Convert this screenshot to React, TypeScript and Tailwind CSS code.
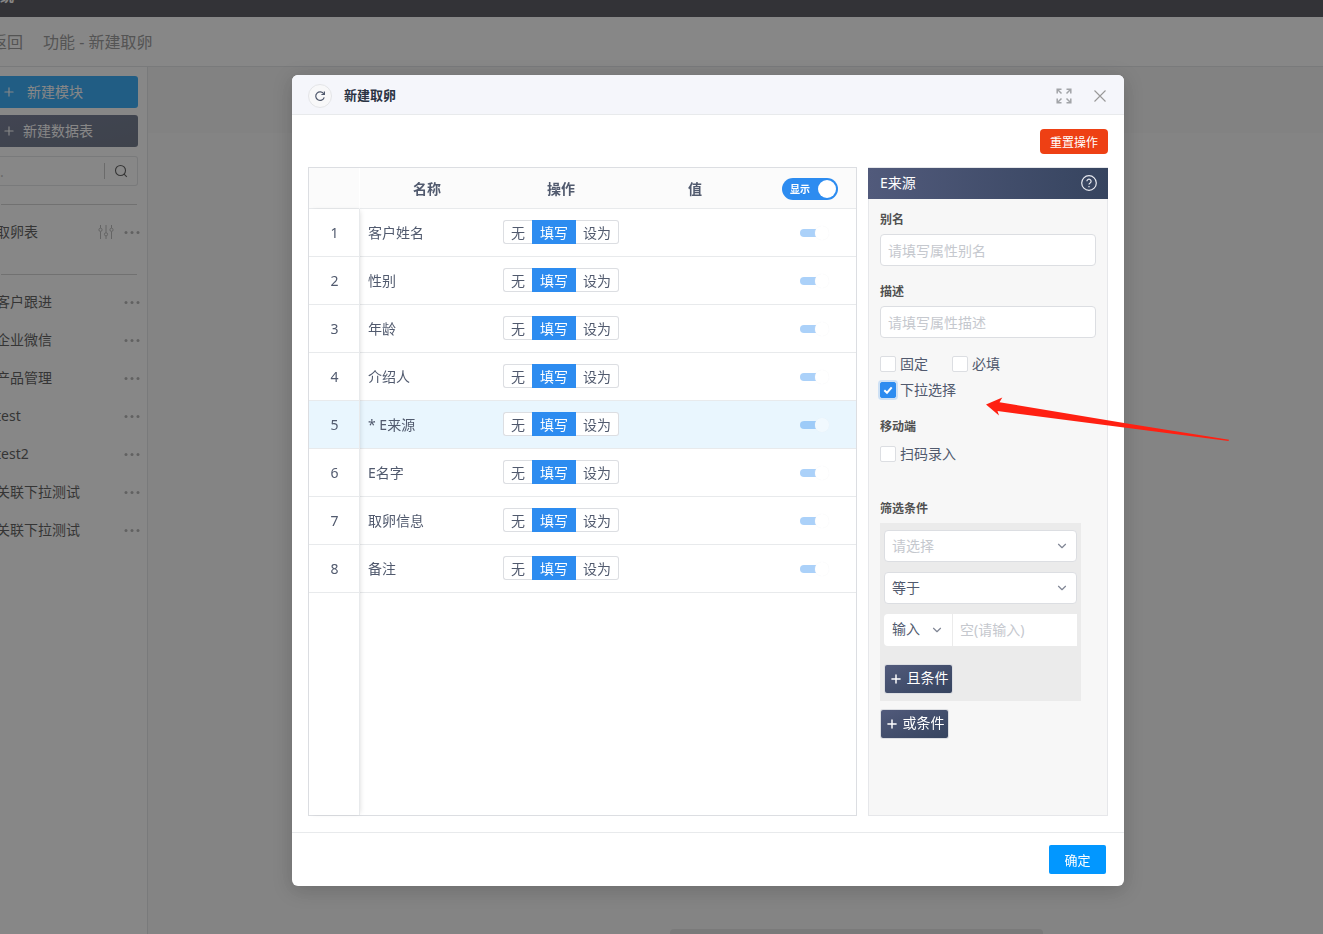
import React, { useState } from "react";
import { ChevronDown, Plus } from "lucide-react";

const fields = [
  "客户姓名",
  "性别",
  "年龄",
  "介绍人",
  "* E来源",
  "E名字",
  "取卵信息",
  "备注",
];

const tables = [
  "客户跟进",
  "企业微信",
  "产品管理",
  "test",
  "test2",
  "关联下拉测试",
  "关联下拉测试",
];

const Dots = () => (
  <svg width="16" height="4" viewBox="0 0 16 4" fill="#a0a0a0">
    <circle cx="2" cy="2.500" r="1.500" />
    <circle cx="8" cy="2.500" r="1.500" />
    <circle cx="14" cy="2.500" r="1.500" />
  </svg>
);

const Sidebar = () => (
  <aside className="w-[148px] shrink-0 border-r border-[#dcdee2] bg-white pt-[9px]">
    <div className="flex flex-col gap-[7px] pr-[9px]">
      <button className="flex h-8 items-center rounded-r-[3px] bg-[#0297f8] pl-[2px] text-sm text-white">
        <Plus size={14} strokeWidth={2} />
        <span className="ml-[11px]">新建模块</span>
      </button>
      <button className="flex h-8 items-center rounded-r-[3px] bg-gradient-to-br from-[#515a7b] to-[#4a556c] pl-[2px] text-sm text-white">
        <Plus size={14} strokeWidth={2} />
        <span className="ml-[7px]">新建数据表</span>
      </button>
    </div>
    <div className="mt-[9px] mr-[9px] flex h-[30px] items-center rounded-r-[3px] border border-l-0 border-[#dcdee2]">
      <input
        aria-label="搜索"
        placeholder="."
        className="h-full min-w-0 flex-1 bg-transparent text-sm outline-none placeholder:text-[#b5b5b5]"
      />
      <span className="h-4 w-px bg-[#b8b8b8]" />
      <button aria-label="搜索" className="flex w-8 justify-center">
        <svg width="14" height="14" viewBox="0 0 14 14" fill="none" stroke="#333" strokeWidth="1.1">
          <circle cx="6.5" cy="6.5" r="5" />
          <path d="M9.8 9.8 L12.8 12.8" />
        </svg>
      </button>
    </div>
    <hr className="mt-[18px] mr-[10px] ml-px border-[#c8c8c8]" />
    <div className="mt-2 -ml-1 flex h-[38px] items-center pr-[7px] text-sm text-[#333]">
      <span className="flex-1">取卵表</span>
      <svg width="16" height="16" viewBox="0 0 16 16" fill="none" stroke="#a8a8a8" strokeWidth="1">
        <path d="M2.5 1v3M2.5 7.500v7.500M8 1v7.500M8 12v3M13.500 1v3M13.500 7.500v7.500" />
        <circle cx="2.500" cy="5.800" r="1.600" />
        <circle cx="8" cy="10.300" r="1.600" />
        <circle cx="13.500" cy="5.800" r="1.600" />
      </svg>
      <span className="ml-[10px]">
        <Dots />
      </span>
    </div>
    <hr className="mt-[23px] mr-[10px] ml-px border-[#c8c8c8]" />
    <ul className="mt-2 -ml-1 text-sm text-[#333]">
      {tables.map((name, i) => (
        <li key={i} className="flex h-[38px] items-center justify-between pr-[7px]">
          <span>{name}</span>
          <Dots />
        </li>
      ))}
    </ul>
  </aside>
);

const Check = ({ label, defaultChecked = false }: { label: string; defaultChecked?: boolean }) => (
  <label className="flex h-[26px] items-center gap-1 text-sm text-[#515a6e]">
    <span className="relative flex">
      <input
        type="checkbox"
        defaultChecked={defaultChecked}
        className="peer h-4 w-4 appearance-none rounded-[2px] border border-[#dcdee2] bg-white checked:border-[#2d8cf0] checked:bg-[#2d8cf0] checked:ring-2 checked:ring-[#2d8cf0]/20"
      />
      <svg
        className="pointer-events-none absolute inset-0 hidden peer-checked:block"
        width="16"
        height="16"
        viewBox="0 0 16 16"
        fill="none"
        stroke="#fff"
        strokeWidth="2"
      >
        <path d="M4.300 8.200 L7 10.700 L11.700 5.300" />
      </svg>
    </span>
    {label}
  </label>
);

const Dropdown = ({
  label,
  options,
  className,
}: {
  label: string;
  options: string[];
  className: string;
}) => (
  <div className="relative">
    <select
      aria-label={label}
      className={`h-8 w-full appearance-none bg-white text-sm outline-none ${className}`}
    >
      {options.map((o) => (
        <option key={o}>{o}</option>
      ))}
    </select>
    <ChevronDown
      size={14}
      className="pointer-events-none absolute top-[9px] right-2 text-[#808695]"
    />
  </div>
);

const TextField = ({ id, label, placeholder }: { id: string; label: string; placeholder: string }) => (
  <div>
    <label htmlFor={id} className="block text-xs leading-5 font-bold text-[#515151]">
      {label}
    </label>
    <input
      id={id}
      placeholder={placeholder}
      className="mt-1 h-8 w-full rounded border border-[#dcdee2] bg-white px-[7px] text-sm outline-none placeholder:text-[#c5c8ce]"
    />
  </div>
);

const AddButton = ({ children }: { children: React.ReactNode }) => (
  <button className="flex h-7 w-[67px] items-center justify-center gap-1 rounded-[2px] bg-gradient-to-br from-[#515a7b] to-[#36445f] text-sm text-white shadow-[0_0_0_1px_#dcdee2]">
    <Plus size={14} strokeWidth={2.5} className="shrink-0" />
    <span className="pb-[2px] whitespace-nowrap">{children}</span>
  </button>
);

const FieldTable = () => {
  const [selected, setSelected] = useState(4);

  return (
    <div className="relative min-w-0 flex-1 border border-[#dcdee2] text-sm text-[#515a6e]">
      <table className="w-full table-fixed border-separate border-spacing-0">
        <colgroup>
          <col className="w-[51px]" />
          <col className="w-[134px]" />
          <col className="w-[134px]" />
          <col className="w-[134px]" />
          <col />
        </colgroup>
        <thead className="bg-[#fbfbfb]">
          <tr className="h-[41px]">
            <th className="border-r border-b border-r-white border-b-[#e8eaec]" />
            <th className="border-b border-[#e8eaec] pt-[2px] font-bold">名称</th>
            <th className="border-b border-[#e8eaec] pt-[2px] font-bold">操作</th>
            <th className="border-b border-[#e8eaec] pt-[2px] font-bold">值</th>
            <th className="border-b border-[#e8eaec] pt-[2px] pl-[2px]">
              <button
                role="switch"
                aria-checked="true"
                className="mx-auto flex h-[22px] w-14 items-center justify-between rounded-full bg-[#2d8cf0] pr-[2px] pl-2 text-[10px] font-bold text-white"
              >
                显示
                <span className="h-[18px] w-[18px] rounded-full bg-white" />
              </button>
            </th>
          </tr>
        </thead>
        <tbody>
          {fields.map((name, i) => (
            <tr
              key={name}
              onClick={() => setSelected(i)}
              className={selected === i ? "h-12 bg-[#e9f6fe]" : "h-12"}
            >
              <td className="border-b border-[#e8eaec] text-center">{i + 1}</td>
              <td className="border-b border-[#e8eaec] px-2">{name}</td>
              <td className="border-b border-[#e8eaec] pb-[2px]">
                <div className="mx-auto flex h-6 w-[116px] leading-6">
                  <button className="w-[29px] rounded-l-[3px] border border-r-0 border-[#dcdee2] bg-white">
                    无
                  </button>
                  <button className="w-11 border border-[#2d8cf0] bg-[#2d8cf0] text-white">填写</button>
                  <button className="flex-1 rounded-r-[3px] border border-l-0 border-[#dcdee2] bg-white">
                    设为
                  </button>
                </div>
              </td>
              <td className="border-b border-[#e8eaec]" />
              <td className="border-b border-[#e8eaec] pl-[38px]">
                <button
                  role="switch"
                  aria-checked="true"
                  aria-label={name}
                  className="flex h-[14px] items-center opacity-40"
                >
                  <span className="h-2 w-4 rounded-l-full bg-[#2d8cf0]" />
                  <span className="-ml-px h-[14px] w-[14px] rounded-full bg-white shadow-[0_0_1px_#dcdee2]" />
                </button>
              </td>
            </tr>
          ))}
        </tbody>
      </table>
      {/* shadow of the fixed number column */}
      <div className="pointer-events-none absolute top-[41px] bottom-0 left-0 w-[51px] border-r border-[#e8eaec] shadow-[2px_0_5px_-2px_rgba(0,0,0,0.15)]" />
    </div>
  );
};

const SettingsPanel = () => (
  <div className="w-60 shrink-0 border border-[#e6e7ea] bg-[#f7f7f7]">
    <div className="-mx-px flex h-[31px] items-center justify-between bg-gradient-to-r from-[#515a7b] to-[#36445f] pr-[11px] pb-[2px] pl-3 text-sm text-white">
      E来源
      <button aria-label="帮助">
        <svg width="16" height="16" viewBox="0 0 16 16" fill="none" stroke="#e8eaf0" strokeWidth="1.2">
          <circle cx="8" cy="8" r="7.300" />
          <path d="M5.900 6.300a2.100 2.100 0 1 1 3.200 1.800c-.7.4-1.100.8-1.100 1.500M8 10.900v1.300" />
        </svg>
      </button>
    </div>
    <div className="px-[11px] pt-[11px]">
      <div className="flex flex-col gap-4">
        <TextField id="alias" label="别名" placeholder="请填写属性别名" />
        <TextField id="desc" label="描述" placeholder="请填写属性描述" />
      </div>
      <div className="mt-[13px] flex flex-wrap gap-x-6">
        <Check label="固定" />
        <Check label="必填" />
        <Check label="下拉选择" defaultChecked />
      </div>
      <h4 className="mt-[14px] mb-1 text-xs leading-5 font-bold text-[#515151]">移动端</h4>
      <Check label="扫码录入" />
      <h4 className="mt-8 mb-1 text-xs leading-5 font-bold text-[#515151]">筛选条件</h4>
      <div className="mr-[15px] bg-[#ebebeb] px-1 pt-[7px] pb-2">
        <div className="flex flex-col gap-[10px]">
          <Dropdown
            label="字段"
            options={["请选择"]}
            className="rounded border border-[#dcdee2] pl-[7px] text-[#c5c8ce]"
          />
          <Dropdown
            label="关系"
            options={["等于"]}
            className="rounded border border-[#dcdee2] pl-[7px] text-[#515a6e]"
          />
          <div className="flex gap-px">
            <div className="w-[68px] shrink-0">
              <Dropdown
                label="方式"
                options={["输入"]}
                className="rounded-l pb-[2px] pl-2 text-[#515a6e]"
              />
            </div>
            <input
              aria-label="条件值"
              placeholder="空(请输入)"
              className="h-8 min-w-0 flex-1 bg-white px-[7px] pb-[2px] text-sm outline-none placeholder:text-[#c5c8ce]"
            />
          </div>
        </div>
        <div className="mt-[19px] pl-px">
          <AddButton>且条件</AddButton>
        </div>
      </div>
      <div className="mt-[9px] pl-px">
        <AddButton>或条件</AddButton>
      </div>
    </div>
  </div>
);

const Dialog = () => (
  <div
    role="dialog"
    aria-label="新建取卵"
    className="relative flex h-[811px] w-[832px] max-w-full flex-col rounded-md bg-white shadow-[0_4px_20px_rgba(0,0,0,0.2)]"
  >
    <header className="flex h-10 shrink-0 items-center rounded-t-md border-b border-[#e8eaec] bg-[#f5f6fb] px-4 pt-[2px]">
      <button
        aria-label="刷新"
        className="flex h-6 w-6 items-center justify-center rounded-full border border-[#e4e5e8] bg-[#f8f8f9]"
      >
        <svg width="12" height="12" viewBox="0 0 12 12" fill="none" stroke="#515a6e" strokeWidth="1.2">
          <path d="M9.800 4A4.300 4.300 0 1 0 10.200 7.300" />
          <path d="M10.400 1.500v3H7.400" />
        </svg>
      </button>
      <h3 className="ml-3 flex-1 text-[13px] font-bold text-[#2c3444]">新建取卵</h3>
      <button aria-label="全屏">
        <svg width="16" height="16" viewBox="0 0 16 16" fill="none" stroke="#a2a4a8" strokeWidth="1.500">
          <path d="M1.200 5.500V1.200h4.300M1.500 1.500l4 4M10.500 1.200h4.300v4.300M14.500 1.500l-4 4M1.200 10.500v4.300h4.300M1.500 14.500l4-4M14.800 10.500v4.300h-4.300M14.500 14.500l-4-4" />
        </svg>
      </button>
      <button aria-label="关闭" className="mr-[2px] ml-[22px]">
        <svg width="12" height="12" viewBox="0 0 12 12" stroke="#999" strokeWidth="1.100">
          <path d="M0.500 0.500l11 11M11.500 0.500l-11 11" />
        </svg>
      </button>
    </header>
    <div className="flex min-h-0 flex-1 flex-col px-4 pt-[14px] pb-4">
      <button className="h-[25px] w-[68px] self-end rounded bg-[#ee4014] pt-[2px] text-xs text-white">
        重置操作
      </button>
      <div className="mt-[13px] flex min-h-0 flex-1 gap-[11px]">
        <FieldTable />
        <SettingsPanel />
      </div>
    </div>
    <footer className="flex h-[54px] shrink-0 items-center justify-end border-t border-[#e8eaec] pr-[18px]">
      <button className="h-[29px] w-[57px] rounded-[2px] bg-[#0297ff] pt-[2px] text-[13px] text-white">
        确定
      </button>
    </footer>
    {/* pointer to the drop-down option */}
    <svg
      className="pointer-events-none absolute top-[320px] left-[692px]"
      width="250"
      height="50"
      viewBox="0 0 250 50"
      fill="#ff2012"
    >
      <path d="M2 9.600 L18.300 2.600 L15.500 7.200 L140 28 L245 44.800 L244.500 46 L140 32.500 L13.500 16 L15 20.500 Z" />
    </svg>
  </div>
);

const App = () => {
  return (
    <div className="flex min-h-screen flex-col overflow-hidden bg-[#f8f8f8] font-['Noto_Sans','Noto_Sans_CJK_SC',sans-serif]">
      <div className="h-[17px] overflow-hidden bg-[#2f2f38] text-sm leading-4 font-bold text-white">
        <div className="-mt-3">统</div>
      </div>
      <nav className="flex h-[50px] items-center border-b border-[#dcdee2] bg-white text-base text-[#808080]">
        <a href="#" className="-ml-[9px]">
          返回
        </a>
        <span className="ml-5">功能 - 新建取卵</span>
      </nav>
      <div className="flex flex-1">
        <Sidebar />
        <main className="flex flex-1 flex-col justify-between">
          <div className="h-[66px] bg-[#f3f3f3]" />
          <div className="ml-[522px] h-[5px] w-[373px] rounded-t bg-[#dedede]" />
        </main>
      </div>

      <div className="fixed inset-0 flex items-start justify-center bg-[#373737]/60 pt-[75px] pl-[93px]">
        <Dialog />
      </div>
    </div>
  );
};

export default App;
